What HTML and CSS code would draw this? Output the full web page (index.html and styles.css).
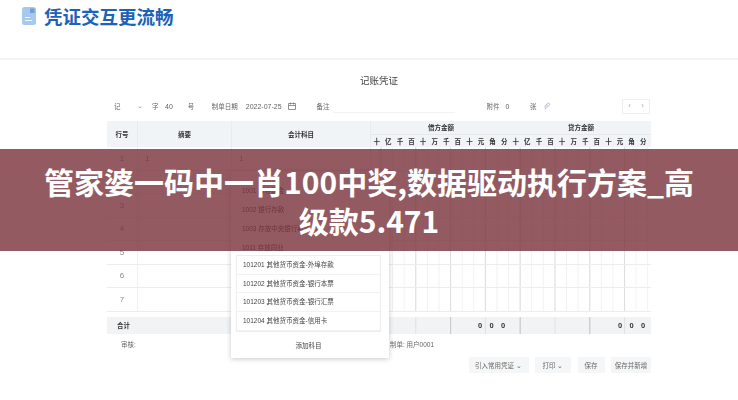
FILE: index.html

```html
<!DOCTYPE html>
<html lang="zh-CN">
<head>
    <meta charset="UTF-8">
    <title>凭证交互更流畅</title>
    <link rel="stylesheet" href="styles.css">
</head>
<body>
    <div class="page">
        <div class="top">
            <svg class="top-icon" width="14" height="18" viewBox="0 0 14 18">
                <rect x="0" y="0" width="14" height="18" rx="2.5" fill="#a8c9ee"/>
                <path d="M8 1.500h4.500v4.500h-4.500z" fill="#6f9fd8"/>
                <path d="M3 10.500h5M3 13.500h7" stroke="#f1f6fc" stroke-width="1.200"/>
            </svg>
            <h1>凭证交互更流畅</h1>
        </div>

        <div class="sheet">
            <div class="sheet-title">记账凭证</div>

            <div class="toolbar">
                <span class="t-kind">记</span>
                <span class="t-arrow">⌄</span>
                <span class="t-zi">字</span>
                <span class="t-num">40</span>
                <span class="t-hao">号</span>
                <span class="t-date">制单日期</span>
                <span class="t-val">2022-07-25</span>
                <svg class="t-cal" width="8" height="8" viewBox="0 0 8 8">
                    <path d="M.5 1.500h7v6h-7zM.5 3.500h7M2.500.5v2M5.500.5v2" fill="none" stroke="#777" stroke-width=".8"/>
                </svg>
                <span class="t-note">备注</span>
                <span class="t-note-field"></span>
                <span class="t-attach">附件</span>
                <span class="t-zero">0</span>
                <span class="t-zhang">张</span>
                <svg class="t-clip" width="8" height="8" viewBox="0 0 8 8">
                    <path d="M1.500 4.500l3-3a1.200 1.200 0 0 1 1.800 1.700l-3.300 3.300a.7.7 0 0 1-1-1l2.800-2.700" fill="none" stroke="#9aa3c4" stroke-width=".7"/>
                </svg>
                <div class="pager"><span>‹</span><span>›</span></div>
            </div>

            <div class="row head">
                <div class="cell">行号</div>
                <div class="cell">摘要</div>
                <div class="cell">会计科目</div>
                <div class="money-head">
                    <div class="money-titles"><span>借方金额</span><span>贷方金额</span></div>
                    <div class="digits">
                        <span>十</span><span>亿</span><span>千</span><span>百</span><span>十</span><span>万</span><span>千</span><span>百</span><span>十</span><span>元</span><span>角</span><span>分</span>
                        <span>十</span><span>亿</span><span>千</span><span>百</span><span>十</span><span>万</span><span>千</span><span>百</span><span>十</span><span>元</span><span>角</span><span>分</span>
                    </div>
                </div>
            </div>

            <div class="row line"><div class="cell">1</div><div class="cell start">1</div><div class="cell start">1</div><div class="money"></div></div>
            <div class="row line"><div class="cell">2</div><div class="cell"></div><div class="cell"></div><div class="money"></div></div>
            <div class="row line"><div class="cell">3</div><div class="cell"></div><div class="cell"></div><div class="money"></div></div>
            <div class="row line"><div class="cell">4</div><div class="cell"></div><div class="cell"></div><div class="money"></div></div>
            <div class="row line"><div class="cell">5</div><div class="cell"></div><div class="cell"></div><div class="money"></div></div>
            <div class="row line"><div class="cell">6</div><div class="cell"></div><div class="cell"></div><div class="money"></div></div>
            <div class="row line"><div class="cell">7</div><div class="cell"></div><div class="cell"></div><div class="money"></div></div>

            <div class="row total">
                <div class="cell total-label">合计</div>
                <div class="cell"></div>
                <div class="cell"></div>
                <div class="total-money">
                    <div class="zeros"><span>0</span><span>0</span><span>0</span></div>
                    <div class="zeros"><span>0</span><span>0</span><span>0</span></div>
                </div>
            </div>

            <div class="sign">
                <span>审核:</span>
                <span>制单: 用户0001</span>
            </div>

            <div class="actions">
                <button class="btn-import">引入常用凭证 ⌄</button>
                <button class="btn-print">打印 ⌄</button>
                <button class="btn-save">保存</button>
                <button class="btn-next">保存并新增</button>
            </div>

            <div class="popover">
                <ul class="subjects">
                    <li>1001 库存现金</li>
                    <li>1002 银行存款</li>
                    <li>1003 存放中央银行款项</li>
                    <li>1011 存放同业</li>
                </ul>
                <ul class="subjects boxed">
                    <li>101201 其他货币资金-外埠存款</li>
                    <li>101202 其他货币资金-银行本票</li>
                    <li>101203 其他货币资金-银行汇票</li>
                    <li>101204 其他货币资金-信用卡</li>
                </ul>
                <div class="add-subject">添加科目</div>
            </div>
        </div>

        <div class="banner">管家婆一码中一肖100中奖,数据驱动执行方案_高级款5.471</div>
    </div>
</body>
</html>
```

FILE: styles.css

```css
* {
    box-sizing: border-box;
}
body {
    margin: 0;
    background: white;
    font-family: "Liberation Sans", "Noto Sans CJK SC", sans-serif;
}
.page {
    position: relative;
    width: 738px;
    height: 400px;
    overflow: hidden;
}

/* header */
.top {
    display: flex;
    align-items: center;
    gap: 8px;
    height: 60px;
    padding: 0 0 26px 22px;
    border-bottom: 2px solid #f3f3f3;
}
.top h1 {
    margin: 0;
    font-size: 18.500px;
    line-height: 24px;
    font-weight: 700;
    color: #1c62b8;
    font-family: "Noto Sans CJK SC", sans-serif;
}

/* voucher */
.sheet {
    position: relative;
    padding: 0 87px 0 107px;
    font-size: 6.500px;
    color: #555;
    filter: blur(0.35px);
}
.sheet-title {
    height: 37px;
    padding-top: 14px;
    text-align: center;
    font-size: 9.500px;
    line-height: 14px;
    color: #444;
}
.toolbar {
    display: flex;
    align-items: center;
    height: 24px;
    padding-bottom: 6px;
    color: #666;
    white-space: nowrap;
}
.toolbar > * { flex: none; }
.t-kind { margin-left: 7px; }
.t-arrow { margin-left: 16.500px; width: 4px; color: #999; }
.t-zi { margin-left: 11px; }
.t-num { margin-left: 6.500px; font-size: 7px; }
.t-hao { margin-left: 15px; }
.t-date { margin-left: 17.500px; }
.t-val { margin-left: 8px; font-size: 7px; }
.t-cal { margin-left: 6px; }
.t-note { margin-left: 21px; }
.t-note-field {
    width: 122px;
    height: 14px;
    margin: 0 32px 0 3px;
    border-bottom: 1px solid #f2f2f2;
}
.t-zero { margin-left: 6px; font-size: 7px; }
.t-zhang { margin-left: 20.500px; }
.t-clip { margin-left: 6.500px; }
.pager {
    display: flex;
    margin-left: 71px;
    border: 1px solid #eceef0;
    color: #aaa;
    font-size: 8px;
}
.pager span {
    width: 13px;
    height: 13px;
    line-height: 12px;
    text-align: center;
}

.row {
    display: grid;
    grid-template-columns: 31px 94px 139px 280px;
}
.cell {
    display: flex;
    align-items: center;
    justify-content: center;
}
.cell.start {
    justify-content: flex-start;
    padding-left: 7px;
}
.head {
    height: 26px;
    background: #f1f4f6;
    color: #333;
    font-weight: 700;
}
.head .cell {
    border-right: 1px solid #e9ecef;
}
.money-titles {
    display: grid;
    grid-template-columns: 140px 140px;
    height: 13px;
    line-height: 13px;
    text-align: center;
}
.digits {
    display: grid;
    grid-template-columns: repeat(24, 1fr);
    height: 13px;
    line-height: 13px;
    padding-right: 2px;
    text-align: center;
    border-top: 1px solid #e6e9ec;
}
.line {
    height: 23.500px;
    border-bottom: 1px solid #ecedee;
    color: #888;
    font-size: 8px;
}
.line .cell {
    border-right: 1px solid #f0f0f0;
}
.money {
    background-image:
        linear-gradient(to right, #dcdddf 1px, transparent 1px),
        linear-gradient(to right, #f1f1f2 1px, transparent 1px);
    background-size: 34.800px 100%, 11.600px 100%;
    background-position: 9.500px 0, 9.500px 0;
    background-repeat: repeat-x;
}
.total {
    height: 17px;
    margin-top: 5px;
    background: #f1f3f5;
    color: #333;
}
.total-label {
    justify-content: flex-start;
    padding-left: 10px;
    font-weight: 700;
}
.total-money {
    display: grid;
    grid-template-columns: 140px 140px;
    background-image:
        linear-gradient(to right, #c4c9cd 1px, transparent 1px),
        linear-gradient(to right, #dfe2e5 1px, transparent 1px);
    background-size: 69.600px 100%, 34.800px 100%;
    background-position: 9.500px 0, 9.500px 0;
    background-repeat: repeat-x;
}
.zeros {
    display: flex;
    justify-content: flex-end;
    align-items: center;
    padding-right: 2px;
    font-weight: 700;
    font-size: 7.500px;
}
.zeros span {
    width: 11.600px;
    text-align: center;
}
.sign {
    display: flex;
    justify-content: space-between;
    height: 23.500px;
    padding: 6px 217px 0 14px;
    line-height: 10px;
    color: #666;
}
.actions {
    display: flex;
    justify-content: flex-end;
    gap: 6.500px;
}
.actions button {
    height: 16px;
    padding: 0;
    border: none;
    background: #f5f6f7;
    color: #666;
    font: inherit;
}
.actions .btn-import { width: 60px; }
.actions .btn-print { width: 36px; }
.actions .btn-save { width: 27px; }
.actions .btn-next { width: 40px; }

/* subject dropdown, opened over the table */
.popover {
    position: absolute;
    left: 231px;
    top: 111px;
    width: 158px;
    height: 187px;
    padding: 10px 8px 0 5px;
    background: white;
    box-shadow: 0 1px 5px rgba(0,0,0,0.22);
    color: #444;
}
.subjects {
    margin: 0;
    padding: 0;
    list-style: none;
}
.subjects li {
    height: 19px;
    padding-left: 6px;
    line-height: 19px;
    white-space: nowrap;
}
.subjects.boxed {
    margin-top: -2px;
    border: 1px solid #eee;
}
.subjects.boxed li {
    height: 18.700px;
    line-height: 18px;
    border-bottom: 1px solid #f2f2f2;
}
.add-subject {
    margin-top: 5px;
    height: 18px;
    line-height: 18px;
    text-align: center;
}

/* title strip over the picture */
.banner {
    position: absolute;
    left: 0;
    top: 149px;
    width: 738px;
    height: 102px;
    padding: 13px 40px 0;
    background: rgba(120,50,58,0.8);
    color: white;
    font-family: "Noto Sans CJK SC", sans-serif;
    font-size: 30px;
    font-weight: 700;
    line-height: 38.500px;
    text-align: center;
}
```
